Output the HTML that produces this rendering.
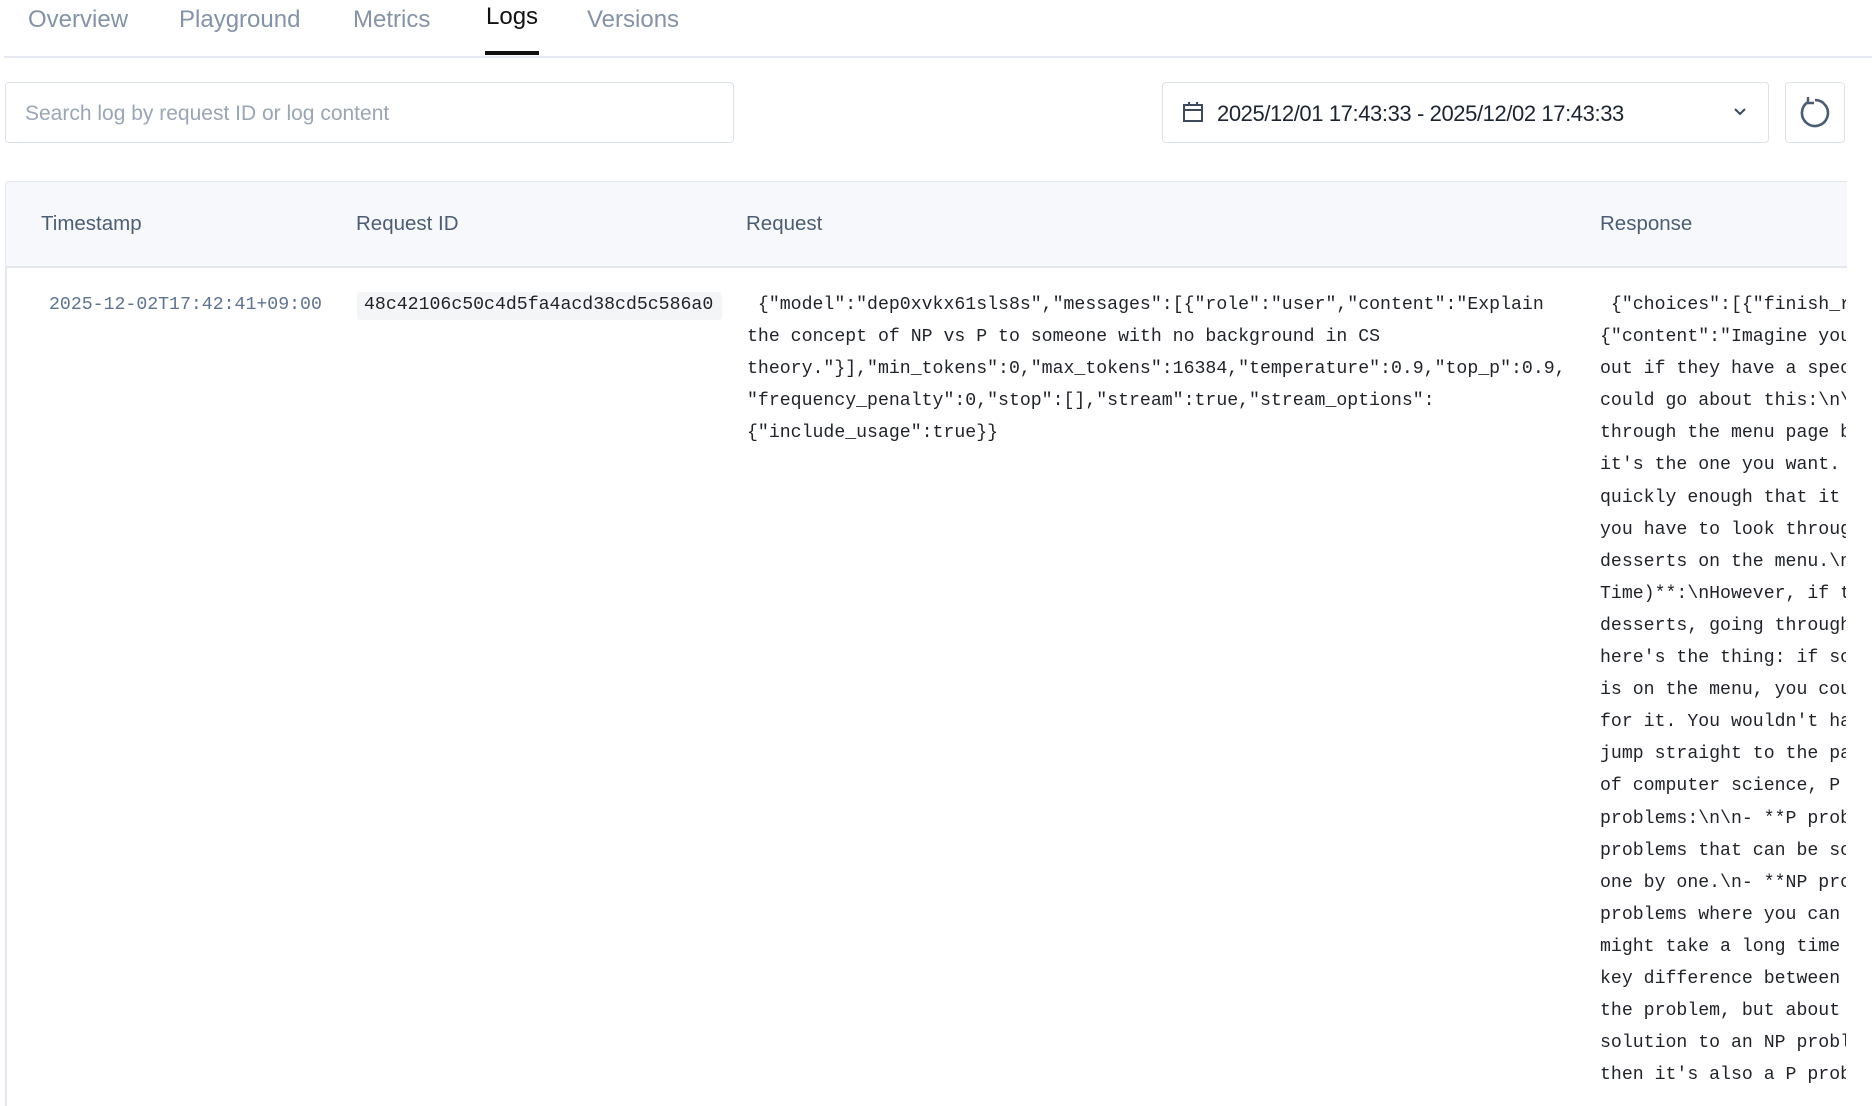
<!DOCTYPE html>
<html><head><meta charset="utf-8"><style>
html,body{margin:0;padding:0;width:1872px;height:1101px;overflow:hidden;background:#fff;font-family:"Liberation Sans",sans-serif;}
.tab{position:absolute;top:6px;font-size:24px;color:#8593a6;}
.abs{position:absolute;}
.mono{font-family:"Liberation Mono",monospace;font-size:18.2px;line-height:32.1px;color:#1f2329;white-space:pre;}
.hd{position:absolute;top:212px;font-size:20.5px;color:#4d5d73;}
</style></head><body>
<div class="tab" style="left:28px">Overview</div>
<div class="tab" style="left:179px">Playground</div>
<div class="tab" style="left:353px">Metrics</div>
<div class="tab" style="left:486px;top:3px;color:#111">Logs</div>
<div class="tab" style="left:587px">Versions</div>
<div class="abs" style="left:485px;top:51px;width:54px;height:4px;background:#111"></div>
<div class="abs" style="left:4px;top:56px;width:1868px;height:2px;background:#e6eaf0"></div>

<div class="abs" style="left:5px;top:82px;width:727px;height:59px;border:1.5px solid #dde3ea;border-radius:4px"></div>
<div class="abs" style="left:25px;top:102px;font-size:21px;color:#9aa6b6">Search log by request ID or log content</div>

<div class="abs" style="left:1162px;top:82px;width:605px;height:59px;border:1.5px solid #dde3ea;border-radius:4px"></div>
<svg class="abs" style="left:1181px;top:100px" width="24" height="24" viewBox="0 0 24 24" fill="none" stroke="#3d4a5c" stroke-width="2"><rect x="3" y="5" width="18" height="16"/><line x1="3" y1="10" x2="21" y2="10"/><line x1="8" y1="2" x2="8" y2="6"/><line x1="16" y1="2" x2="16" y2="6"/></svg>
<div class="abs" style="left:1217px;top:101px;font-size:22px;color:#1c2430;letter-spacing:-0.4px">2025/12/01 17:43:33 - 2025/12/02 17:43:33</div>
<svg class="abs" style="left:1732px;top:105px" width="16" height="14" viewBox="0 0 16 14" fill="none" stroke="#3d4a5c" stroke-width="2"><polyline points="3,4 8,9 13,4"/></svg>

<div class="abs" style="left:1785px;top:82px;width:58px;height:59px;border:1.5px solid #dde3ea;border-radius:4px"></div>
<svg class="abs" style="left:1796px;top:94px" width="36" height="36" viewBox="0 0 36 36" fill="none" stroke="#4a5a70" stroke-width="2.6"><path d="M12 8 A13 13 0 1 0 19 6"/><polyline points="12,3 12,9 18,9" stroke-width="2.4"/></svg>

<div class="abs" style="left:5px;top:181px;width:1841px;height:84px;background:#f6f8fb;border-top:1.5px solid #e3e8ef;border-bottom:2px solid #e3e8ef;border-left:1.5px solid #e3e8ef;border-radius:4px 0 0 0"></div>
<div class="abs" style="left:5px;top:266px;width:1.5px;height:840px;background:#e3e8ef"></div>
<div class="hd" style="left:41px">Timestamp</div>
<div class="hd" style="left:356px">Request ID</div>
<div class="hd" style="left:746px">Request</div>
<div class="hd" style="left:1600px">Response</div>

<div class="abs mono" style="left:49px;top:289px;color:#5e7390">2025-12-02T17:42:41+09:00</div>
<div class="abs" style="left:357px;top:292px;width:365px;height:28px;background:#f4f5f7;border-radius:3px"></div>
<div class="abs mono" style="left:364px;top:289px">48c42106c50c4d5fa4acd38cd5c586a0</div>
<div class="abs mono" style="left:747px;top:289px"> {"model":"dep0xvkx61sls8s","messages":[{"role":"user","content":"Explain
the concept of NP vs P to someone with no background in CS
theory."}],"min_tokens":0,"max_tokens":16384,"temperature":0.9,"top_p":0.9,
"frequency_penalty":0,"stop":[],"stream":true,"stream_options":
{"include_usage":true}}</div>
<div class="abs mono" style="left:1600px;top:289px;width:246px;overflow:hidden"> {"choices":[{"finish_reason"
{"content":"Imagine you're
out if they have a specific
could go about this:\n\n1.
through the menu page by
it's the one you want.
quickly enough that it
you have to look through
desserts on the menu.\n\n
Time)**:\nHowever, if the
desserts, going through
here's the thing: if some
is on the menu, you could
for it. You wouldn't have
jump straight to the page
of computer science, P
problems:\n\n- **P problems
problems that can be solved
one by one.\n- **NP problems
problems where you can
might take a long time
key difference between
the problem, but about
solution to an NP problem
then it's also a P problem</div>
</body></html>
